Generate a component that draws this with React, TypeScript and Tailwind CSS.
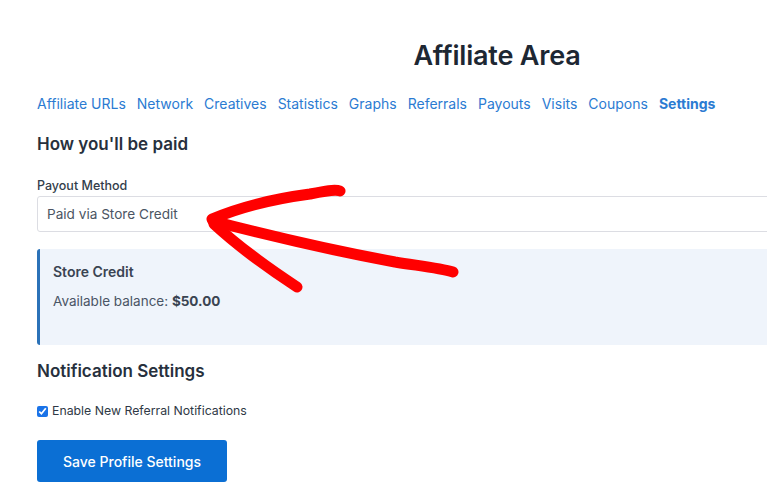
import React from "react";

const tabs = [
  "Affiliate URLs",
  "Network",
  "Creatives",
  "Statistics",
  "Graphs",
  "Referrals",
  "Payouts",
  "Visits",
  "Coupons",
  "Settings",
];

export default function App() {
  return (
    <div className="relative h-[498px] w-[767px] overflow-hidden bg-white font-['Inter',sans-serif] text-[#1e293b]">
      <div className="w-[957px] pl-[37px]">
        <h1 className="pt-[38px] text-center text-[27px] font-semibold leading-[36px] tracking-[-0.2px] text-[#1d2733]">
          Affiliate Area
        </h1>

        {/* Tabs */}
        <nav className="mt-[20px] flex gap-[11px] text-[14px] leading-[20px] text-[#2b7bd2]">
          {tabs.map((t) => (
            <a key={t} href="#" className={t === "Settings" ? "font-bold" : ""}>
              {t}
            </a>
          ))}
        </nav>

        <h2 className="mt-[18px] text-[17px] font-semibold leading-[24px] text-[#27303d]">How you'll be paid</h2>

        <label className="mt-[21px] block text-[12.5px] font-medium leading-[18px] text-[#333d4a]">Payout Method</label>
        <div className="mt-[1px] flex h-[36px] items-center rounded-[3px] border border-[#dcdde3] px-[9px] text-[13.6px] text-[#4b5563]">
          Paid via Store Credit
        </div>

        {/* Store credit box */}
        <div className="mt-[17px] h-[96px] rounded-l-[3px] border-l-[3px] border-[#2b72b8] bg-[#eff4fb] px-[13px] pt-[13px]">
          <div className="text-[14px] font-semibold leading-[20px] text-[#3a4452]">Store Credit</div>
          <div className="mt-[9px] text-[13.5px] leading-[20px] text-[#4a5565]">
            Available balance: <span className="font-bold text-[#3a4452]">$50.00</span>
          </div>
        </div>

        <h2 className="mt-[14px] text-[17px] font-semibold leading-[24px] text-[#27303d]">Notification Settings</h2>

        <label className="mt-[19px] flex items-center gap-[4px] text-[12.3px] leading-[18px] text-[#2f3946]">
          <input type="checkbox" defaultChecked className="h-[11px] w-[11px] accent-[#1a73e8]" />
          Enable New Referral Notifications
        </label>

        <button className="mt-[20px] h-[42px] w-[190px] rounded-[3px] bg-[#0b6fd4] text-[14px] font-medium text-white">
          Save Profile Settings
        </button>
      </div>

      {/* Red annotation arrow */}
      <svg className="pointer-events-none absolute left-0 top-0" width="767" height="498" viewBox="0 0 767 498">
        <g fill="none" stroke="#ff0000" strokeLinecap="round" strokeLinejoin="round">
          <path d="M212 219 C245 205 280 198 310 194 C325 191 335 189 340 191" strokeWidth="11" />
          <path d="M213 221 C270 236 330 250 395 262 C420 266 440 268 453 272" strokeWidth="11" />
          <path d="M214 224 C240 248 268 268 297 287" strokeWidth="11" />
        </g>
      </svg>
    </div>
  );
}
